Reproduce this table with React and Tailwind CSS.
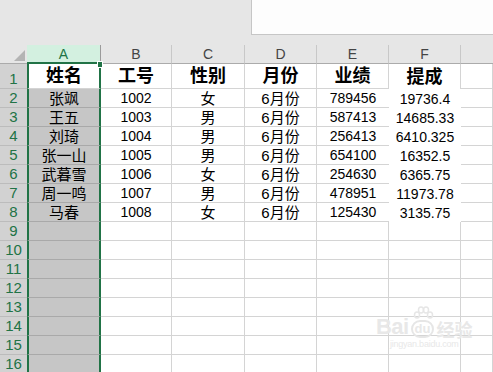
import React from "react";

const cols = ["A", "B", "C", "D", "E", "F"];

const rows = [
  ["姓名", "工号", "性别", "月份", "业绩", "提成"],
  ["张飒", "1002", "女", "6月份", "789456", "19736.4"],
  ["王五", "1003", "男", "6月份", "587413", "14685.33"],
  ["刘琦", "1004", "男", "6月份", "256413", "6410.325"],
  ["张一山", "1005", "男", "6月份", "654100", "16352.5"],
  ["武暮雪", "1006", "女", "6月份", "254630", "6365.75"],
  ["周一鸣", "1007", "男", "6月份", "478951", "11973.78"],
  ["马春", "1008", "女", "6月份", "125430", "3135.75"],
];

const font = { fontFamily: '"Liberation Sans", "Noto Sans CJK SC", Arial, sans-serif' };

function cellClass(r, c) {
  // r: 1-based row, c: 0..6 (A..G)
  const base = "flex items-end justify-center overflow-hidden whitespace-nowrap";
  if (c === 0) {
    const bg = r === 1 ? "bg-white border-b-[#d4d4d4]" : "bg-[#c6c6c6] border-b-[#a9a9a9]";
    return `${base} ${bg} border-l-2 border-r-2 border-b border-l-[#217346] border-r-[#217346]`;
  }
  if (c === 5 && r === 1) return `${base} bg-white border-r border-[#d4d4d4]`;
  if (c === 5 && r <= 8) return `${base} bg-white`;
  if (c === 4 && r >= 2 && r <= 8) return `${base} bg-white border-b border-[#d4d4d4]`;
  return `${base} bg-white border-r border-b border-[#d4d4d4]`;
}

export default function App() {
  const allRows = Array.from({ length: 16 }, (_, i) => i + 1);

  return (
    <div className="relative w-[493px] h-[372px] overflow-hidden bg-white text-black" style={font}>
      {/* top bar */}
      <div className="flex h-[45px] bg-[#e6e6e6]">
        <div className="ml-auto w-[242px] h-[35px] bg-[#fdfdfd] border-l border-b border-[#c6c6c6]" />
      </div>

      {/* sheet */}
      <div className="grid grid-cols-[27px_74px_71px_73px_72px_72px_72px_1fr]">
        {/* column headers */}
        <div className="h-[19px] bg-[#e6e6e6] border-b border-[#ababab] flex items-end justify-end pr-[2px] pb-[2px]">
          <div className="w-0 h-0 border-l-[11px] border-l-transparent border-b-[11px] border-b-[#b4b4b4]" />
        </div>
        {cols.map((c, i) =>
          i === 0 ? (
            <div
              key={c}
              className="h-[19px] bg-[#d3f0e0] border-b-2 border-b-[#217346] border-r border-r-[#9b9b9b] flex items-center justify-center text-[14px] text-[#217346] leading-none"
            >
              {c}
            </div>
          ) : (
            <div
              key={c}
              className="h-[19px] bg-[#e6e6e6] border-b border-b-[#ababab] border-r border-r-[#c8c8c8] flex items-center justify-center text-[14px] text-[#444444] leading-none"
            >
              {c}
            </div>
          )
        )}
        <div className="h-[19px] bg-[#e6e6e6] border-b border-[#ababab]" />

        {/* data rows */}
        {allRows.map((r) => {
          const h = r === 1 ? "h-[25px]" : "h-[19px]";
          const data = rows[r - 1];
          return (
            <React.Fragment key={r}>
              <div
                className={`${h} bg-[#d2d2d2] border-b border-[#bcbcbc] flex items-end justify-center pb-[1px] text-[15px] leading-[16px] text-[#217346]`}
              >
                {r}
              </div>
              {Array.from({ length: 7 }, (_, c) => {
                const v = data && c < 6 ? data[c] : "";
                const txt =
                  r === 1
                    ? "text-[18px] font-bold leading-[22px] pb-[1px]"
                    : /^[0-9.]+$/.test(v)
                    ? "text-[14px] leading-[16px] pb-[1px]"
                    : "text-[15px] leading-[17px]";
                return (
                  <div key={c} className={`${h} ${cellClass(r, c)} ${txt}`}>
                    {v}
                  </div>
                );
              })}
            </React.Fragment>
          );
        })}
      </div>

      {/* fill handle */}
      <div className="absolute left-[97px] top-[61px] w-[6px] h-[7px] bg-[#217346] border border-white" />

      {/* watermark */}
      <div className="absolute left-[376px] top-[306px] flex flex-col items-center text-[#e8e8e8] pointer-events-none">
        <div className="flex items-end leading-none">
          <span className="text-[22px] font-bold tracking-tight">Bai</span>
          <span className="relative mx-[2px] flex flex-col items-center">
            <svg width="22" height="16" viewBox="0 0 22 16" className="mb-[-2px]">
              <g fill="none" stroke="#e6e6e6" strokeWidth="1.5">
                <ellipse cx="5" cy="9" rx="2.5" ry="3" />
                <ellipse cx="9" cy="4" rx="2.5" ry="3" />
                <ellipse cx="14" cy="4" rx="2.5" ry="3" />
                <ellipse cx="18" cy="9" rx="2.5" ry="3" />
              </g>
            </svg>
            <span className="rounded-full border-2 border-[#e6e6e6] px-[2px] text-[13px] font-bold leading-[14px]">du</span>
          </span>
          <span className="text-[18px] font-bold" style={{ fontFamily: '"Noto Sans CJK SC", sans-serif' }}>
            经验
          </span>
        </div>
        <div className="text-[9px] leading-[12px] tracking-tight">jingyan.baidu.com</div>
      </div>
    </div>
  );
}
